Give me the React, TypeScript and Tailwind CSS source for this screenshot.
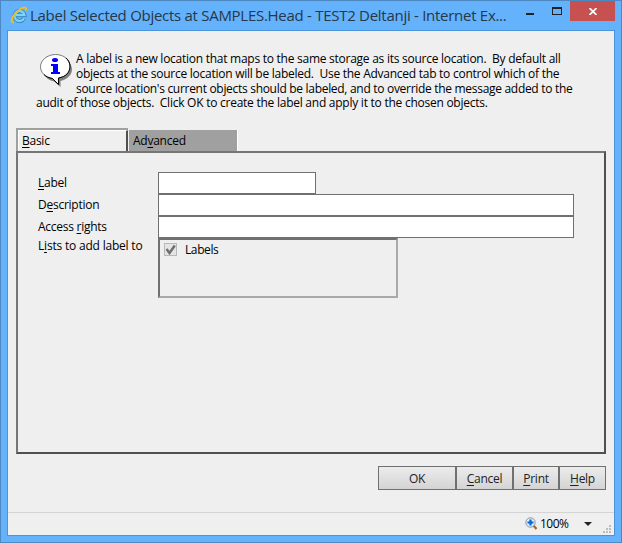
import type { ReactNode } from 'react'

const BUTTONS = [
  { key: '', rest: 'OK', width: 'w-[78px]' },
  { key: 'C', rest: 'ancel', width: 'w-[57px]' },
  { key: 'P', rest: 'rint', width: 'w-[46px]' },
  { key: 'H', rest: 'elp', width: 'w-[47px]' },
]

const U = ({ children }: { children: ReactNode }) => (
  <span className="underline decoration-1 underline-offset-2 [text-decoration-skip-ink:none]">{children}</span>
)

function BrowserIcon() {
  return (
    <svg className="mt-[5px] ml-[9px] shrink-0" width="18" height="18" viewBox="0 0 18 18" fill="none">
      <path d="M14 12.200a5 5 0 1 1 .4-3.200H6" stroke="#2f7fae" strokeWidth="4" />
      <path d="M14 12.200a5 5 0 1 1 .4-3.200H6" stroke="#7fd3f7" strokeWidth="2.400" />
      <path d="M4 16.300c-3.500.7-3-3.300.5-7.700C8 3.800 13.500.700 15.500 1.800c.9.6.7 1.700.2 2.900" stroke="#f2bd22" strokeWidth="1.900" />
    </svg>
  )
}

function InfoIcon() {
  return (
    <svg className="mt-[5px] shrink-0" width="33" height="33" viewBox="0 0 33 33" fill="none">
      <path d="M16 3C25 3 32 8.500 32 15.500c0 5.500-4.500 9.500-11.500 11.500v6L14 27.500C7 26 3 21 3 15.500" fill="#808080" />
      <path d="M15.500.500C24 .500 30 6 30 12.500c0 6-4.500 10.500-11.500 11.500v6.500l-6-6C5 23.500.500 18.500.500 12.500S7 .500 15.500.500Z" fill="#fff" stroke="#777" />
      <path d="M26 4c2.700 2.300 4 5.200 4 8.500 0 6-4.500 10.500-11.500 11.500v6.500l-6-6C9 24 6 22.500 4 20.500" stroke="#000" />
      <ellipse cx="15" cy="6" rx="3" ry="2" fill="#00f" />
      <path d="M11 10h7v8h2v2h-9v-2h2v-6h-2z" fill="#00f" />
    </svg>
  )
}

function ZoomIcon() {
  return (
    <svg className="mt-[4px] shrink-0" width="13" height="13" viewBox="0 0 13 13" fill="none">
      <path d="m8 8 3.500 4" stroke="#a8642d" strokeWidth="2.200" />
      <circle cx="5.500" cy="5.500" r="4.700" fill="#d8efff" stroke="#8795a5" />
      <path d="M5.500 2.500v6M2.500 5.500h6" stroke="#0868c8" strokeWidth="2.200" />
    </svg>
  )
}

function Resizer() {
  return (
    <svg className="absolute right-[3px] bottom-[2px]" width="8" height="8" viewBox="0 0 8 8" fill="#bdbdbd" shapeRendering="crispEdges">
      <path d="M6 0h2v2H6zM3 3h2v2H3zM6 3h2v2H6zM0 6h2v2H0zM3 6h2v2H3zM6 6h2v2H6z" />
    </svg>
  )
}

function TitleBar() {
  return (
    <header className="flex h-[29px] shrink-0">
      <BrowserIcon />
      <h1 className="ml-[2px] w-[480px] whitespace-nowrap pt-[2px] text-[15px] leading-[24px] tracking-[-0.28px] text-[#263747]">
        Label Selected Objects at SAMPLES.Head - TEST2 Deltanji - Internet Ex...
      </h1>
      <div className="ml-auto mr-px flex">
        <button aria-label="Minimize" className="flex w-6 justify-center pt-[12px]">
          <span className="h-[2px] w-2 bg-[#222]" />
        </button>
        <button aria-label="Maximize" className="ml-[3px] flex w-6 justify-center pt-[6px]">
          <span className="h-2 w-[10px] border border-t-2 border-[#222]" />
        </button>
      </div>
      <button aria-label="Close" className="mr-[6px] flex h-5 w-[45px] shrink-0 items-center justify-center bg-[#c75050]">
        <svg width="8" height="7" viewBox="0 0 8 7" stroke="#fff" strokeWidth="1.700">
          <path d="m.5 0 7 7m0-7-7 7" />
        </svg>
      </button>
    </header>
  )
}

function Intro() {
  return (
    <div className="flex h-[97px] pl-[32px] pt-[18px]">
      <InfoIcon />
      <div className="whitespace-pre pt-[2px]">
        <p className="ml-[3px] h-[15px] leading-[15px]">A label is a new location that maps to the same storage as its source location.  By default all</p>
        <p className="ml-[3px] h-[15px] leading-[15px]">objects at the source location will be labeled.  Use the Advanced tab to control which of the</p>
        <p className="ml-[3px] h-[14px] leading-[15px] tracking-[-0.3px]">source location's current objects should be labeled, and to override the message added to the</p>
        <p className="-ml-[37px] h-[15px] leading-[15px] tracking-[-0.25px]">audit of those objects.  Click OK to create the label and apply it to the chosen objects.</p>
      </div>
    </div>
  )
}

export default function App() {
  return (
    <div className="flex h-[543px] w-[622px] flex-col border border-[#4e88c0] bg-[#64b1fc] font-['Open_Sans',sans-serif] text-[12px] tracking-[-0.26px] text-black">
      <TitleBar />
      <main className="mx-[6px] mb-[6px] flex h-[506px] flex-col border border-[#4c94da] bg-[#efefef]">
        <Intro />

        <div className="mx-[8px] flex h-[23px] shrink-0">
          <div className="h-[23px] w-[112px] border-l-2 border-t-2 border-[#a0a0a0]">
            <div className="h-[21px] border-l border-t border-r-2 border-white border-r-[#505050] pl-[3px] leading-[20px]">
              <U>B</U>asic
            </div>
          </div>
          <div className="ml-px mt-[2px] h-[21px] w-[109px] border-r border-white bg-[#a0a0a0] pl-[4px] leading-[21px]">
            Ad<U>v</U>anced
          </div>
        </div>

        <section className="mx-[8px] flex h-[303px] shrink-0">
          <div className="flex w-[590px] flex-col border-2 border-[#505050] border-l-[#767676] border-t-[#767676] pl-[20px] pt-[19px]">
            <div className="flex h-[22px]">
              <label className="w-[120px] leading-[22px]"><U>L</U>abel</label>
              <input className="w-[158px] border border-[#707070] bg-white" />
            </div>
            <div className="flex h-[22px]">
              <label className="w-[120px] leading-[22px]">D<U>e</U>scription</label>
              <input className="w-[416px] border border-[#707070] bg-white" />
            </div>
            <div className="flex h-[22px]">
              <label className="w-[120px] leading-[22px]">Access <U>r</U>ights</label>
              <input className="w-[416px] border border-[#707070] bg-white" />
            </div>
            <div className="flex h-[60px]">
              <label className="w-[120px] leading-[16px] tracking-[-0.2px]">L<U>i</U>sts to add label to</label>
              <div className="flex w-[240px] border-2 border-[#707070] border-b-[#a9a9a9] border-r-[#a9a9a9] pl-[4px] pt-[3px]">
                <span className="h-[13px] w-[13px] border border-[#b8b8b8] bg-[#e5e5e5]">
                  <svg width="11" height="11" viewBox="0 0 11 11" fill="none" stroke="#707070" strokeWidth="2.500">
                    <path d="m1.500 5 3 4L9.800 1.500" />
                  </svg>
                </span>
                <span className="ml-[8px] leading-[14px] tracking-[-0.4px]">Labels</span>
              </div>
            </div>
          </div>
        </section>

        <div className="mr-[8px] mt-[12px] flex h-6 shrink-0 justify-end">
          {BUTTONS.map(b => (
            <button
              key={b.rest}
              className={`${b.width} border border-[#707070] bg-linear-to-b from-[#ececec] to-[#d4d4d4] pt-px leading-[21px] text-[#222]`}
            >
              {b.key && <U>{b.key}</U>}{b.rest}
            </button>
          ))}
        </div>

        <footer className="relative mt-auto flex h-[23px] shrink-0 border-t border-[#d4d4d4] pl-[517px]">
          <ZoomIcon />
          <span className="ml-[2px] w-[29px] leading-[21px] tracking-[-0.5px]">100%</span>
          <svg className="ml-[15px] mt-[9px]" width="8" height="4" viewBox="0 0 8 4" fill="#222">
            <path d="M0 0h8L4 4z" />
          </svg>
          <Resizer />
        </footer>
      </main>
    </div>
  )
}
